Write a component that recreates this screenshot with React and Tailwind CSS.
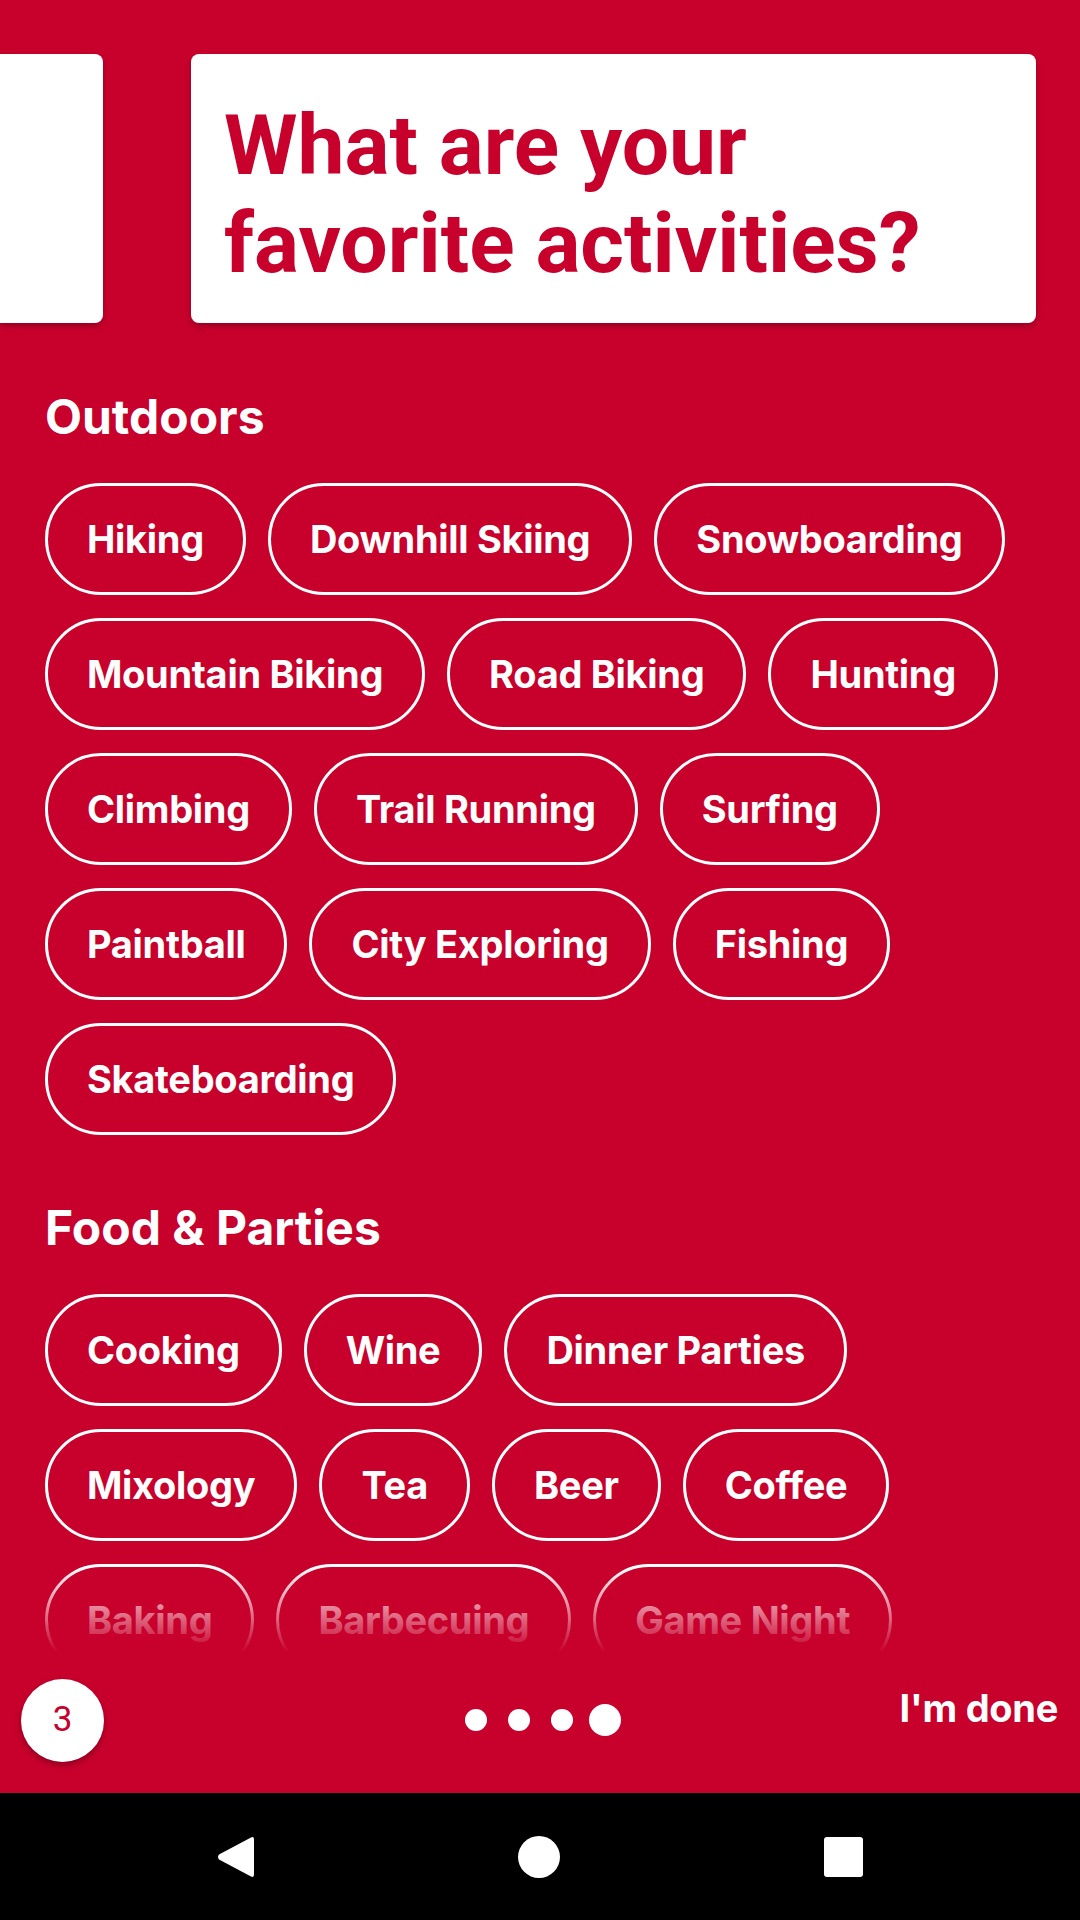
import React from "react";

const outdoors = [
  ["Hiking", "Downhill Skiing", "Snowboarding"],
  ["Mountain Biking", "Road Biking", "Hunting"],
  ["Climbing", "Trail Running", "Surfing"],
  ["Paintball", "City Exploring", "Fishing"],
  ["Skateboarding"],
];

const food = [
  ["Cooking", "Wine", "Dinner Parties"],
  ["Mixology", "Tea", "Beer", "Coffee"],
  ["Baking", "Barbecuing", "Game Night"],
];

const Chip = ({ label }) => (
  <button className="h-[112px] px-[39px] rounded-full border-[3px] border-white flex items-center text-white text-[38px] font-bold leading-none tracking-[-0.3px] whitespace-nowrap">
    {label}
  </button>
);

const Section = ({ title, rows, first }) => (
  <section className={first ? "mt-[65px]" : "mt-[64px]"}>
    <h2 className="text-white text-[48px] font-bold leading-[58px]">{title}</h2>
    <div className="mt-[37px] flex flex-col gap-[23px]">
      {rows.map((row, i) => (
        <div key={i} className="flex gap-[22px]">
          {row.map((label) => (
            <Chip key={label} label={label} />
          ))}
        </div>
      ))}
    </div>
  </section>
);

const App = () => {
  return (
    <div
      className="w-[1080px] h-[1920px] bg-[#c8002c] flex flex-col overflow-hidden"
      style={{ fontFamily: "Inter, 'Noto Sans', sans-serif" }}
    >
      {/* ================== SCROLL CONTENT ================== */}
      <div className="relative flex-1 overflow-hidden">
        {/* question cards carousel */}
        <div className="pt-[54px] flex">
          <div className="w-[103px] h-[269px] bg-white rounded-r-[8px] shadow-[0_3px_6px_rgba(0,0,0,0.25)]" />
          <div className="ml-[88px] w-[845px] h-[269px] bg-white rounded-[8px] shadow-[0_3px_6px_rgba(0,0,0,0.25)] pt-[43px] pl-[33px]">
            <h1
              className="text-[#c8002c] text-[84px] font-bold leading-[98px]"
              style={{ fontFamily: "Roboto, 'Liberation Sans', sans-serif" }}
            >
              What are your
              <br />
              favorite activities?
            </h1>
          </div>
        </div>

        <div className="px-[45px]">
          <Section title="Outdoors" rows={outdoors} first />
          <Section title="Food & Parties" rows={food} />
        </div>

        {/* fade out at the bottom */}
        <div className="absolute bottom-0 inset-x-0 h-[84px] bg-linear-to-b from-[#c8002c00] to-[#c8002c]" />
      </div>

      {/* ================== BOTTOM BAR ================== */}
      <div className="h-[141px] pb-[5px] grid grid-cols-3 items-center">
        <div className="pl-[21px]">
          <div
            className="w-[83px] h-[83px] rounded-full bg-white flex items-center justify-center text-[#c8002c] text-[35px] shadow-[0_3px_6px_rgba(0,0,0,0.3)]"
            style={{ fontFamily: "Roboto, sans-serif" }}
          >
            3
          </div>
        </div>
        <div className="flex justify-center">
          {[22, 22, 22, 32].map((d, i) => (
            <div key={i} className="w-[43px] flex justify-center items-center">
              <div
                className={`rounded-full bg-white ${d === 32 ? "w-[32px] h-[32px]" : "w-[22px] h-[22px]"}`}
              />
            </div>
          ))}
        </div>
        <div className="flex justify-end pr-[22px]">
          <button className="text-white text-[38px] font-bold leading-none tracking-[-0.3px] mb-[25px]">I'm done</button>
        </div>
      </div>

      {/* ================== ANDROID NAV ================== */}
      <div className="h-[127px] bg-black flex items-center justify-center gap-[264px]">
        <svg width="37" height="42" viewBox="0 0 37 42">
          <path
            d="M34 1.5 Q37 0 37 3.5 L37 38.5 Q37 42 34 40.5 L2 23.5 Q0 21 2 18.5 Z"
            fill="white"
          />
        </svg>
        <div className="w-[42px] h-[42px] rounded-full bg-white" />
        <div className="w-[39px] h-[40px] rounded-[3px] bg-white" />
      </div>
    </div>
  );
};

export default App;
